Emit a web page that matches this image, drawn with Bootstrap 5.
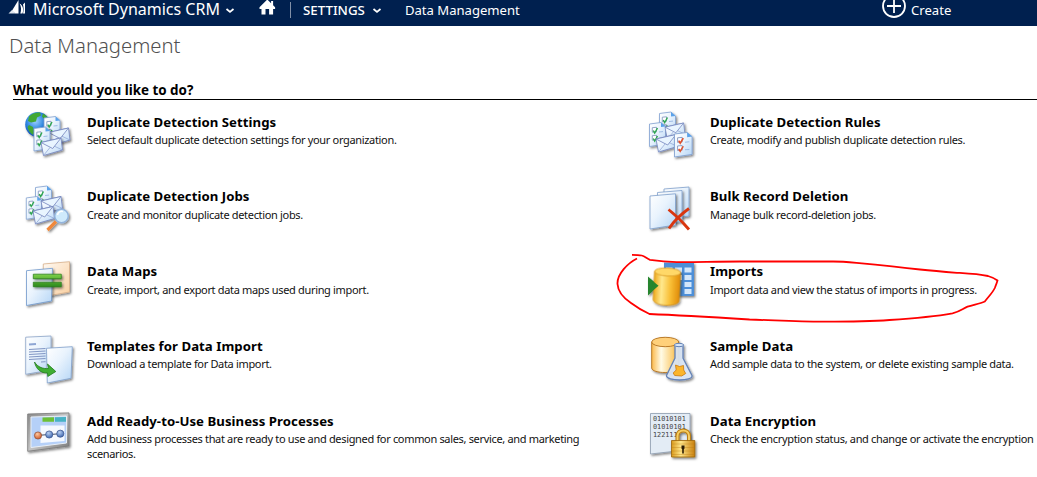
<!DOCTYPE html>
<html lang="en">
<head>
<meta charset="utf-8">
<meta name="viewport" content="width=device-width, initial-scale=1">
<title>Data Management</title>
<link rel="stylesheet" href="https://cdn.jsdelivr.net/npm/bootstrap@5.3.0/dist/css/bootstrap.min.css">
<style>
body{font-family:"Noto Sans","Open Sans",sans-serif;color:#000;height:477px;overflow:hidden;background:#fff}
.crm-bar{height:26px;background:#00204f;color:#fff;font-size:13.1px;line-height:20px;white-space:nowrap}
.crm-bar svg{flex:none;display:block}
.logo{margin-left:8px}
.brand{font-size:16px;line-height:18px;margin-left:5px;height:18px;letter-spacing:0}
.sep{width:1px;height:16px;background:#8290a7;margin:2px 12px 0 14px}
.home{margin-left:24px}
.settings{font-weight:500;font-size:13.3px}
.settings-caret{margin-left:7px}
.crumb{margin-left:23px}
.create{left:881px}
.create-label{margin-left:4px}
.page-title{font-size:20.3px;line-height:28px;color:#505050;font-weight:300;margin:5px 0 0 9px}
.ask{font-size:13.4px;line-height:18px;font-weight:700;margin:22px 0 0 13px;height:19px;border-bottom:1px solid #000;white-space:nowrap}
.tasks{display:grid;grid-template-columns:623px 440px;grid-template-rows:74px 75px 75px 75px 70px;margin:11px 0 0 24px}
.ico{width:50px;height:50px;flex:none;overflow:visible}
.tasks section:nth-child(even) .ico{margin-left:1px;margin-right:-1px}
.task-text{margin-left:13px;padding-top:2px}
.task-name{font-size:13.2px;line-height:18px;font-weight:700;margin:0;white-space:nowrap;letter-spacing:.04px}
.task-info{font-size:11px;line-height:15px;margin:2px 0 0;color:#111;white-space:nowrap;letter-spacing:-.33px}
.tight .task-info{margin-top:1px}
.mark-up{left:0;top:0;pointer-events:none}
</style>
</head>
<body class="position-relative">
<svg width="0" height="0" class="position-absolute" aria-hidden="true">
<defs>
<linearGradient id="pg" x1="0" y1="0" x2="1" y2="1"><stop offset="0" stop-color="#fff"/><stop offset=".45" stop-color="#e9f3fd"/><stop offset="1" stop-color="#b4d5f6"/></linearGradient>
<linearGradient id="or" x1="0" y1="0" x2="1" y2="1"><stop offset="0" stop-color="#fffaf4"/><stop offset="1" stop-color="#f9cfa0"/></linearGradient>
<linearGradient id="gr" x1="0" y1="0" x2="0" y2="1"><stop offset="0" stop-color="#7cd04a"/><stop offset="1" stop-color="#2c8a1c"/></linearGradient>
<linearGradient id="cy" x1="0" y1="0" x2="1" y2="0"><stop offset="0" stop-color="#eda91c"/><stop offset=".3" stop-color="#ffe88d"/><stop offset=".65" stop-color="#f8bd34"/><stop offset="1" stop-color="#e08c0a"/></linearGradient>
<linearGradient id="cl" x1="0" y1="0" x2="1" y2="0"><stop offset="0" stop-color="#fbb94c"/><stop offset=".35" stop-color="#fffbe6"/><stop offset="1" stop-color="#f9b638"/></linearGradient>
<linearGradient id="fr" x1="0" y1="0" x2="1" y2="1"><stop offset="0" stop-color="#8b8b8b"/><stop offset=".5" stop-color="#c4c4c4"/><stop offset="1" stop-color="#777"/></linearGradient>
<linearGradient id="lk" x1="0" y1="0" x2="1" y2="0"><stop offset="0" stop-color="#d99a1c"/><stop offset=".4" stop-color="#ffe68a"/><stop offset="1" stop-color="#c97f0c"/></linearGradient>
<radialGradient id="gl" cx=".4" cy=".35" r=".7"><stop offset="0" stop-color="#9fd4ff"/><stop offset=".5" stop-color="#2f86e0"/><stop offset="1" stop-color="#0b3fa8"/></radialGradient>
<radialGradient id="nb" cx=".4" cy=".3" r=".7"><stop offset="0" stop-color="#b9d0f2"/><stop offset="1" stop-color="#3f68b0"/></radialGradient>
<radialGradient id="no" cx=".4" cy=".3" r=".7"><stop offset="0" stop-color="#ffc9a0"/><stop offset="1" stop-color="#cf5a2a"/></radialGradient>
<filter id="sh" x="-20%" y="-20%" width="150%" height="150%"><feDropShadow dx="1.3" dy="1.5" stdDeviation=".9" flood-color="#000" flood-opacity=".5"/></filter>
<g id="sheet"><path d="M0 1.500 11.500 0 16 4v17.500L0 24z" fill="url(#pg)" stroke="#7f9fd0" stroke-width=".8"/><path d="M11.500 0v4.600L16 4z" fill="#5aa2ea"/><path d="M2.800 5.200 7 4.800v4.500l-4.200.4zM2.800 13.200 7 12.800v4.500l-4.200.4z" fill="#fff" stroke="#7b8fba" stroke-width=".8"/><path d="M9.500 9.500l4-.4M9.500 17l4-.4" stroke="#9cbbe4"/></g>
<g id="ticks" fill="none" stroke-width="1.400"><path d="M3.800 8 5.200 10.500 8 5.500M3.800 16 5.200 18.500 8 13.500"/></g>
<g id="env"><path d="M0 4.500 20 0l1.500 12L2.500 17.500z" fill="url(#pg)" stroke="#7183bd" stroke-width=".8"/><path d="M2.500 17.500 9 9.500M21.500 12 13 8" stroke="#8ba2d2" stroke-width=".7"/><path d="M0 4.500 11.700 10.500 20 0z" fill="#e9f5ff" stroke="#7183bd" stroke-width=".8"/></g>
</defs>
</svg>

<nav class="crm-bar d-flex align-items-start">
<svg class="logo" width="20" height="16" viewBox="0 0 20 16"><path d="M3.500 11.500 10.500 0v13.500H8z" fill="#fff"/><path d="M.5 13.500 4 10l4 3.500z" fill="#dfe5ee"/><path d="M11.500 3.500c1.800 3 2 6.500.8 10h2.200c1.400-4 .6-8-3-10z" fill="#fff"/><path d="M15 4.500 17 2.500v11h-2c.8-3 .8-6 0-9z" fill="#fff"/></svg>
<span class="brand">Microsoft Dynamics CRM</span>
<svg class="brand-caret" style="margin-left:5px" width="10" height="16" viewBox="0 0 10 16"><path d="M1.500 9l3.500 3 3.500-3" fill="none" stroke="#fff" stroke-width="1.700"/></svg>
<svg class="home" width="17" height="15" viewBox="0 0 17 15"><path d="M8.300-.5.500 7.300V9h2v5.500h4V9h3.600v5.500h4V9h2V7.300l-2-2V1h-2v2.300z" fill="#fff"/></svg>
<span class="sep"></span>
<span class="settings">SETTINGS</span>
<svg class="settings-caret" width="10" height="16" viewBox="0 0 10 16"><path d="M1.500 9l3.500 3 3.500-3" fill="none" stroke="#fff" stroke-width="1.700"/></svg>
<span class="crumb">Data Management</span>
<span class="create d-flex position-absolute"><svg width="26" height="20" viewBox="0 0 26 20"><circle cx="13" cy="6" r="11" fill="none" stroke="#fff" stroke-width="1.800"/><path d="M13-1v14M6 6h14" stroke="#fff" stroke-width="1.800"/></svg><span class="create-label">Create</span></span>
</nav>

<h1 class="page-title">Data Management</h1>
<h2 class="ask">What would you like to do?</h2>

<main class="tasks">
<section class="d-flex tight">
<svg class="ico" viewBox="0 0 50 50"><g filter="url(#sh)"><circle cx="13.700" cy="13.500" r="12.500" fill="url(#gl)"/><path d="M5 5.500C8 2.500 12 1 16 1.500l1 3-4 2-1 4-5 1-3-1.500zM19 2.500c4 2 6 5 7 9l-5-2-3-4zM5 14l4 2 1 5-1 3c-3-2-5-5-5.500-8z" fill="#42a836"/></g><g filter="url(#sh)"><use href="#sheet" transform="translate(20 5.500)"/><use href="#ticks" transform="translate(20 5.500)" stroke="#2ea84e"/><use href="#env" transform="translate(24.500 17)"/></g><g filter="url(#sh)"><use href="#sheet" transform="translate(10 16)"/><use href="#ticks" transform="translate(10 16)" stroke="#2ea84e"/></g><g filter="url(#sh)"><use href="#env" transform="translate(17 27)"/></g></svg>
<div class="task-text"><h3 class="task-name">Duplicate Detection Settings</h3><p class="task-info">Select default duplicate detection settings for your organization.</p></div>
</section>
<section class="d-flex tight">
<svg class="ico" viewBox="0 0 50 50"><g filter="url(#sh)"><use href="#sheet" transform="translate(11.500 1)"/><use href="#ticks" transform="translate(11.500 1)" stroke="#2ea84e"/></g><g filter="url(#sh)"><use href="#sheet" transform="translate(1.500 11.500)"/><use href="#ticks" transform="translate(1.500 11.500)" stroke="#2ea84e"/><use href="#env" transform="translate(17 12) scale(.93)"/></g><g filter="url(#sh)"><use href="#env" transform="translate(8 23.500)"/></g><g filter="url(#sh)"><use href="#sheet" transform="translate(26.500 21.500) scale(1.100 1.020)"/><use href="#ticks" transform="translate(26.500 21.500) scale(1.100 1.020)" stroke="#e2502a"/></g></svg>
<div class="task-text"><h3 class="task-name">Duplicate Detection Rules</h3><p class="task-info">Create, modify and publish duplicate detection rules.</p></div>
</section>
<section class="d-flex">
<svg class="ico" viewBox="0 0 50 50"><g filter="url(#sh)"><use href="#sheet" transform="translate(11.500 1)"/><use href="#ticks" transform="translate(11.500 1)" stroke="#2ea84e"/></g><g filter="url(#sh)"><use href="#sheet" transform="translate(2.300 11.500) scale(.95)"/><use href="#ticks" transform="translate(2.300 11.500) scale(.95)" stroke="#2ea84e"/><use href="#env" transform="translate(17 11.500)"/></g><g filter="url(#sh)"><use href="#env" transform="translate(9 21.500)"/></g><g filter="url(#sh)"><path d="M32 36.500 23.500 45" stroke="#f0883a" stroke-width="3.200"/><circle cx="37.500" cy="31" r="6.800" fill="#cfeafc" stroke="#93b4dc" stroke-width="1.500"/></g><path d="M33.500 30c.5-2.500 3-4.500 5.500-3.500" stroke="#fff" stroke-width="1.600" fill="none"/></svg>
<div class="task-text"><h3 class="task-name">Duplicate Detection Jobs</h3><p class="task-info">Create and monitor duplicate detection jobs.</p></div>
</section>
<section class="d-flex">
<svg class="ico" viewBox="0 0 50 50" fill="url(#pg)" stroke="#7fa0cc" stroke-width=".8"><path filter="url(#sh)" d="M16 4 41 2v29l-25 3.500z"/><path filter="url(#sh)" d="M9.500 7.500 34 5.500v31l-24.500 3z"/><path filter="url(#sh)" d="M2 11 27.500 8.800V40L2 44z"/><path d="M20.500 24.500c7 5.500 14 12 20.500 20M41 23.500c-7 5-14 11-20 20" fill="none" stroke="#d9360f" stroke-width="2.800"/></svg>
<div class="task-text"><h3 class="task-name">Bulk Record Deletion</h3><p class="task-info">Manage bulk record-deletion jobs.</p></div>
</section>
<section class="d-flex">
<svg class="ico" viewBox="0 0 50 50"><path filter="url(#sh)" d="M19.300 4 45.500 1.700V32l-26.200 4.700z" fill="url(#or)" stroke="#d8b08a" stroke-width=".8"/><path filter="url(#sh)" d="M2.500 10.700 28.500 8.300 27.500 41l-25 4.500z" fill="url(#pg)" stroke="#7098cc" stroke-width=".8"/><g filter="url(#sh)" fill="url(#gr)" stroke="#257a17" stroke-width=".7"><path d="M9.300 14.200h28v4.500h-28zM9.300 22.200h28v4.500h-28z"/></g></svg>
<div class="task-text"><h3 class="task-name">Data Maps</h3><p class="task-info">Create, import, and export data maps used during import.</p></div>
</section>
<section class="d-flex">
<svg class="ico" viewBox="0 0 50 50"><g filter="url(#sh)"><path d="M16 2.500h30V36H16z" fill="#4d8fd8"/><path d="M18 7.500h6.500v5H18zM27 7.500h7v5h-7zM36.500 7.500h7v5h-7zM36.500 15h7v5h-7zM36.500 22h7v5h-7zM36.500 29h7v5h-7zM27 15h7v5h-7z" fill="#d4e7fa"/></g><path filter="url(#sh)" d="M0 16.500 10.500 25.700 0 35.500z" fill="#27852d"/><g filter="url(#sh)" transform="rotate(3 19 27)"><path d="M5.800 12v28c0 7 26 7 26 0V12z" fill="url(#cy)" stroke="#d18c13" stroke-width=".7"/><ellipse cx="18.800" cy="12" rx="13" ry="4" fill="#ffd867" stroke="#d99a22" stroke-width=".8"/></g><path d="M4.500 20.700 10.500 25.700 4.500 31z" fill="#27852d"/></svg>
<div class="task-text"><h3 class="task-name">Imports</h3><p class="task-info">Import data and view the status of imports in progress.</p></div>
</section>
<section class="d-flex tight">
<svg class="ico" viewBox="0 0 50 50"><path filter="url(#sh)" d="M1.700 2.200 27 1v34L1.700 39.300z" fill="url(#pg)" stroke="#8aa3c8" stroke-width=".8"/><path d="M5 9.500 12 9" stroke="#8ea6d4" stroke-width="2.200"/><path d="M5 14.500l16.500-1M5 17l16.500-1M5 19.500l16.500-1M5 22l16.500-1M5 24.500l16.500-1M17 27l4.500-.3" stroke="#8196c4"/><path filter="url(#sh)" d="M22.500 13.300 48.300 11.700 47 43.300 23.300 48z" fill="url(#pg)" stroke="#7f9fcc" stroke-width=".8"/><path d="M10.500 27c3.500 5.500 9 7 14 6.500l-1-4.500 8.300 7.500-8 5-.3-3.500C17 38.500 12 34 10.500 27z" fill="#3fae33" stroke="#1f7a1c" stroke-width=".8"/></svg>
<div class="task-text"><h3 class="task-name">Templates for Data Import</h3><p class="task-info">Download a template for Data import.</p></div>
</section>
<section class="d-flex tight">
<svg class="ico" viewBox="0 0 50 50"><g filter="url(#sh)" stroke="#b3701d" stroke-width=".9"><path d="M3.700 7v26c0 6 27 6 27 0V7z" fill="url(#cl)"/><ellipse cx="17.200" cy="7" rx="13.500" ry="4.700" fill="#ffd07a"/></g><g filter="url(#sh)"><path d="M27 10h8v13l9 17.500c1.500 6-26 6-25.500 0L27 23z" fill="#dbe8f7" fill-opacity=".9" stroke="#6583b6" stroke-width="1.300"/></g><ellipse cx="31" cy="10" rx="4.600" ry="1.700" fill="#d6e5f8" stroke="#6583b6"/><path d="M27.500 30l4 1.500 4-1 .2 4.500 2 3.500-4 2.500-7-.5-1.500-2.500 3-3z" fill="#fbb52c" stroke="#c9790e" stroke-width=".8"/></svg>
<div class="task-text"><h3 class="task-name">Sample Data</h3><p class="task-info">Add sample data to the system, or delete existing sample data.</p></div>
</section>
<section class="d-flex tight">
<svg class="ico" viewBox="0 0 50 50"><path filter="url(#sh)" d="M3.700 4 45 2.900V36L3.700 41.300z" fill="url(#fr)" stroke="#777" stroke-width=".8"/><path d="M7 7 42.500 6v27L7 37.500z" fill="#b5d0f8" stroke="#e8eef5"/><path d="M16.500 15.500h24V31l-24 2z" fill="#f5f9ff"/><path d="M18.500 7.500l11.500-.3v4.500H18.500z" fill="#6cc035"/><path d="M31 7.200 42 7v4.700H31z" fill="#47b2c4"/><path d="M14.700 25.300 36.700 23.700" stroke="#444f66"/><g stroke="#3b558c" stroke-width=".7"><circle cx="14" cy="25.500" r="3.600" fill="url(#no)" stroke="#8b4a30"/><circle cx="25.200" cy="24.500" r="3.600" fill="url(#nb)"/><circle cx="36.300" cy="23.700" r="3.600" fill="url(#nb)"/></g></svg>
<div class="task-text"><h3 class="task-name">Add Ready-to-Use Business Processes</h3><p class="task-info">Add business processes that are ready to use and designed for common sales, service, and marketing<br>scenarios.</p></div>
</section>
<section class="d-flex tight">
<svg class="ico" viewBox="0 0 50 50"><path filter="url(#sh)" d="M2.500 3.500h39.500v36l-39.500 4.500z" fill="#e3ecf5" stroke="#8d9cae" stroke-width=".8"/><g font-family="DejaVu Sans Mono, monospace" font-size="6.800" fill="#444"><text x="5" y="11">01010101</text><text x="5" y="19">01010101</text><text x="5" y="27">122111</text></g><g filter="url(#sh)"><path d="M29.500 32v-6c0-7.500 11.500-7.500 11.500 0v6" fill="none" stroke="#b97d12" stroke-width="4"/><path d="M29.500 32v-6c0-7.500 11.500-7.500 11.500 0v6" fill="none" stroke="#f6cd62" stroke-width="2"/><path d="M23.500 30.500h23.300v16.500H23.500z" fill="url(#lk)" stroke="#9a6409" stroke-width=".8"/></g><path d="M24 34h22.500M24 37.500h22.500M24 41h22.500M24 44.500h22.500" stroke="#b97a10" stroke-opacity=".45" stroke-width=".8"/><path d="M33.500 35.500h3v3l-.7 1v4h-1.600v-4l-.7-1z" fill="#2b1c04"/></svg>
<div class="task-text"><h3 class="task-name">Data Encryption</h3><p class="task-info">Check the encryption status, and change or activate the encryption</p></div>
</section>
</main>

<svg class="mark-up position-absolute" width="1037" height="477" viewBox="0 0 1037 477"><path d="M637 258.500C628 263 617 274 617.500 284 618 293 625 299 631 303c6 4.500 12 8 18.500 11 25 1 60 3 100 5.500 30 1 50 2.300 75 2.200 25 0 45-.2 65-1.700 22-1.500 45-3.500 63-6.700 8-1.700 10-4.500 15-6.600 6-2 12-3 17.300-5.200 3-4 8-9 10-13.500 1-2.500 2-5 2.700-7.500-3-2.500-6-3.500-9.500-4.500-10-2-20-2.500-31-3.200-13-1-25-2-37-3.300-16-2-40-4.500-63.500-6.700-8-.7-16-1.300-23.500-1.300h-93c-25 0-50 1-63.300.6-10-.5-20-1.500-26.700-2.300-3-1-5-3.500-8.300-4.300-3-.7-6.500-.7-9.700-.7" fill="none" stroke="#f00" stroke-width="1.800"/></svg>
<script src="https://cdn.jsdelivr.net/npm/bootstrap@5.3.0/dist/js/bootstrap.bundle.min.js"></script>
</body>
</html>
